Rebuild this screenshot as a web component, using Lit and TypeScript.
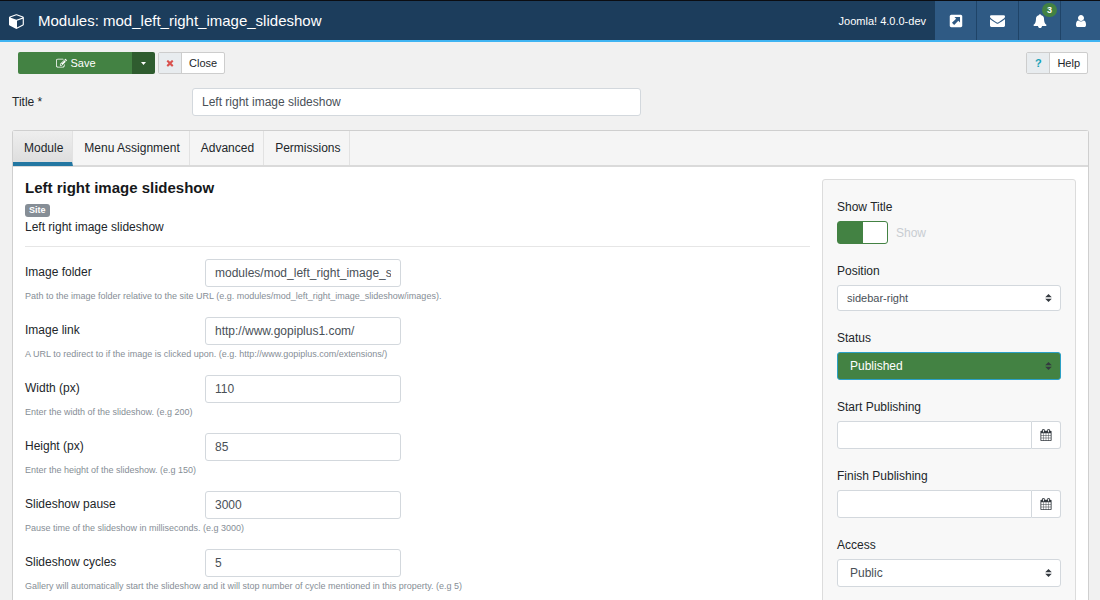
import { LitElement, html, css, svg } from "lit";
import { customElement, state } from "lit/decorators.js";
import { classMap } from "lit/directives/class-map.js";

const ICONS = {
  cube: "M896 1629l640-349v-636l-640 233v752zm-64-865l698-254-698-254-698 254zm832-252v768q0 35-18 65t-49 47l-704 384q-28 16-61 16t-61-16l-704-384q-31-17-49-47t-18-65v-768q0-40 23-73t61-47l704-256q22-8 44-8t44 8l704 256q38 14 61 47t23 73z",
  edit: "M888 1184l116-116-152-152-116 116v56h96v96h56zm440-720q-16-16-33 1l-350 350q-17 17-1 33t33-1l350-350q17-17 1-33zm80 594v190q0 119-84.5 203.5t-203.5 84.5h-832q-119 0-203.5-84.5t-84.5-203.5v-832q0-119 84.5-203.5t203.5-84.5h832q63 0 117 25 15 7 18 23 3 17-9 29l-49 49q-14 14-32 8-23-6-45-6h-832q-66 0-113 47t-47 113v832q0 66 47 113t113 47h832q66 0 113-47t47-113v-126q0-13 9-22l64-64q15-15 35-7t20 29zm-96-738l288 288-672 672h-288v-288zm444 132l-92 92-288-288 92-92q28-28 68-28t68 28l152 152q28 28 28 68t-28 68z",
  times: "M1490 1322q0 40-28 68l-136 136q-28 28-68 28t-68-28l-294-294-294 294q-28 28-68 28t-68-28l-136-136q-28-28-28-68t28-68l294-294-294-294q-28-28-28-68t28-68l136-136q28-28 68-28t68 28l294 294 294-294q28-28 68-28t68 28l136 136q28 28 28 68t-28 68l-294 294 294 294q28 28 28 68z",
  external: "M288 96h1216q80 0 136 56t56 136v1216q0 80-56 136t-136 56h-1216q-80 0-136-56t-56-136v-1216q0-80 56-136t136-56zM700 384l210 210-530 530 280 280 530-530 220 220V384z",
  envelope: "M1792 710v794q0 66-47 113t-113 47h-1472q-66 0-113-47t-47-113v-794q44 49 101 87 362 246 497 345 57 42 92.500 65.500t94.500 48 110 24.500h2q51 0 110-24.500t94.500-48 92.500-65.500q170-123 498-345 57-39 100-87zm0-294q0 79-49 151t-122 123q-376 261-468 325-10 7-42.500 31t-54 38.500-52 32.500-57.500 27-50 9h-2q-23 0-50-9t-57.500-27-52-32.500-54-38.500-42.500-31q-91-64-262-182.500t-205-142.500q-62-42-117-115.500t-55-136.500q0-78 41.500-130t118.500-52h1472q65 0 112.500 47t47.500 113z",
  bell: "M1728 1408q0 52-38 90t-90 38h-448q0 106-75 181t-181 75-181-75-75-181h-448q-52 0-90-38t-38-90q50-42 91-88t85-119.500 74.500-158.500 50-206 19.500-260q0-152 117-282.500t307-158.500q-8-19-8-39 0-40 28-68t68-28 68 28 28 68q0 20-8 39 190 28 307 158.500t117 282.500q0 139 19.500 260t50 206 74.500 158.500 85 119.500 91 88z",
  user: "M1536 1399q0 109-62.500 187t-150.500 78h-854q-88 0-150.500-78t-62.500-187q0-85 8.500-160.500t31.500-152 58.500-131 94-89 134.500-34.500q131 128 313 128t313-128q76 0 134.500 34.500t94 89 58.500 131 31.500 152 8.500 160.500zm-256-887q0 159-112.500 271.500t-271.500 112.500-271.500-112.500-112.500-271.500 112.500-271.500 271.500-112.500 271.500 112.500 112.500 271.500z",
  calendar: "M192 1664h288v-288h-288v288zm352 0h320v-288h-320v288zm-352-352h288v-320h-288v320zm352 0h320v-320h-320v320zm-352-384h288v-288h-288v288zm736 736h320v-288h-320v288zm-384-736h320v-288h-320v288zm768 736h288v-288h-288v288zm-384-352h320v-320h-320v320zm-352-864v-288q0-13-9.500-22.500t-22.500-9.500h-64q-13 0-22.500 9.500t-9.500 22.500v288q0 13 9.500 22.500t22.500 9.500h64q13 0 22.500-9.500t9.500-22.500zm736 864h288v-320h-288v320zm-384-384h320v-288h-320v288zm384 0h288v-288h-288v288zm32-480v-288q0-13-9.500-22.500t-22.500-9.500h-64q-13 0-22.500 9.500t-9.500 22.500v288q0 13 9.500 22.500t22.500 9.500h64q13 0 22.500-9.500t9.500-22.500zm384-64v1280q0 52-38 90t-90 38h-1408q-52 0-90-38t-38-90v-1280q0-52 38-90t90-38h128v-96q0-66 47-113t113-47h64q66 0 113 47t47 113v96h384v-96q0-66 47-113t113-47h64q66 0 113 47t47 113v96h128q52 0 90 38t38 90z",
};

const icon = (name: keyof typeof ICONS, size: number) => html`
  <svg width=${size} height=${size} viewBox="0 0 1792 1792" fill="currentColor" aria-hidden="true">
    ${svg`<path fill-rule=${name === "external" ? "evenodd" : "nonzero"} d=${ICONS[name]}></path>`}
  </svg>`;

const FIELDS = [
  { id: "folder", label: "Image folder", value: "modules/mod_left_right_image_slideshow/images", help: "Path to the image folder relative to the site URL (e.g. modules/mod_left_right_image_slideshow/images)." },
  { id: "link", label: "Image link", value: "http://www.gopiplus1.com/", help: "A URL to redirect to if the image is clicked upon. (e.g. http://www.gopiplus.com/extensions/)" },
  { id: "width", label: "Width (px)", value: "110", help: "Enter the width of the slideshow. (e.g 200)" },
  { id: "height", label: "Height (px)", value: "85", help: "Enter the height of the slideshow. (e.g 150)" },
  { id: "pause", label: "Slideshow pause", value: "3000", help: "Pause time of the slideshow in milliseconds. (e.g 3000)" },
  { id: "cycles", label: "Slideshow cycles", value: "5", help: "Gallery will automatically start the slideshow and it will stop number of cycle mentioned in this property. (e.g 5)" },
];

const TABS = ["Module", "Menu Assignment", "Advanced", "Permissions"];

@customElement("app-root")
export class AppRoot extends LitElement {
  @state() private tab = 0;

  static styles = css`
    :host {
      display: block;
      min-height: 100vh;
      background: #f1f1f1;
      color: #22262a;
      font: 12px/14px "Liberation Sans", Arial, sans-serif;
    }
    * { box-sizing: border-box; }
    button, input, select { font: inherit; color: inherit; margin: 0; padding: 0; border: 0; }
    button { cursor: pointer; }
    svg { display: block; flex: none; }

    .topbar {
      display: flex;
      height: 42px;
      background: #1c3d5c;
      border-top: 1px solid #0b0d12;
      border-bottom: 2px solid #3fb4f2;
      color: #fff;
    }
    .heading { display: flex; align-items: center; gap: 13px; padding-left: 9px; flex: 1; min-width: 0; }
    .heading h1 { margin: 0; font-size: 15px; line-height: 18px; font-weight: 400; white-space: nowrap; }
    .version { align-self: center; padding-right: 9px; font-size: 11px; white-space: nowrap; }
    .topnav { display: flex; }
    .topnav a {
      position: relative;
      display: flex;
      align-items: center;
      justify-content: center;
      width: 41px;
      color: #fff;
      background: #2f5a84;
    }
    .topnav a + a { width: 42px; border-left: 1px solid #1f4468; }
    .topnav a:last-child { width: 40px; }
    .badge {
      position: absolute;
      top: 2px;
      right: 3px;
      width: 15px;
      height: 14px;
      border-radius: 7px;
      background: #438243;
      font-size: 9px;
      font-weight: 700;
      line-height: 14px;
      text-align: center;
    }

    .toolbar { display: flex; gap: 3px; padding: 10px 12px 0 18px; }
    .save { display: flex; width: 137px; height: 22px; border-radius: 2px; overflow: hidden; color: #fff; font-size: 11px; }
    .save button { display: flex; align-items: center; justify-content: center; background: #438243; }
    .save .main { flex: 1; gap: 3px; padding-left: 2px; }
    .save .more { width: 23px; background: #2f5c2f; }
    .split {
      display: flex;
      align-items: stretch;
      height: 22px;
      border: 1px solid #cdcdcd;
      border-radius: 2px;
      overflow: hidden;
      background: #fff;
      font-size: 11px;
    }
    .split .mark {
      display: flex;
      align-items: center;
      justify-content: center;
      width: 23px;
      background: #e8ecef;
      border-right: 1px solid #cdcdcd;
    }
    .split .text { padding: 0 7px; line-height: 20px; }
    .cross { color: #d9534f; }
    .question { color: #17a2b8; font-weight: 700; }
    .spacer { flex: 1; }

    .input {
      display: block;
      width: 100%;
      height: 28px;
      padding: 0 9px;
      border: 1px solid #d3d8dd;
      border-radius: 3px;
      background: #fff;
      color: #495057;
    }
    .titlerow { display: flex; align-items: center; padding: 14px 12px; }
    .titlerow label { width: 180px; flex: none; }
    .titlerow .input { max-width: 449px; }

    .panel { margin: 0 11px 0 12px; border: 1px solid #cfcfcf; border-bottom: 0; border-radius: 3px 3px 0 0; background: #fff; }
    .tabs { display: flex; height: 36px; background: #f5f5f5; border-bottom: 2px solid #dadada; }
    .tab { padding: 0 9px 0 11px; background: none; border-right: 1px solid #e2e2e2; line-height: 34px; white-space: nowrap; }
    .tab.active {
      height: 35px;
      background: linear-gradient(#eeeeee, #dedede);
      border-bottom: 4px solid #2377a2;
      line-height: 35px;
    }
    .body {
      display: grid;
      grid-template-columns: minmax(0, 1fr) 254px;
      gap: 12px;
      padding: 12px;
    }
    .body h2 { margin: 0; font-size: 15px; line-height: 17px; color: #16181a; }
    .site {
      display: inline-block;
      margin-top: 8px;
      padding: 0 4px;
      border-radius: 3px;
      background: #868e96;
      color: #fff;
      font-size: 9px;
      line-height: 13px;
      font-weight: 700;
      vertical-align: top;
    }
    .desc { margin: 3px 0 0; }
    .rule { margin: 12px 0; border: 0; border-top: 1px solid #e6e6e6; }
    .field { margin-bottom: 15px; }
    .line { display: flex; align-items: flex-start; }
    .line label { width: 180px; flex: none; padding-top: 6px; }
    .line .input { width: 196px; }
    .help { margin: 4px 0 0; color: #868e96; font-size: 9px; line-height: 11px; }

    .side {
      display: flex;
      flex-direction: column;
      gap: 20px;
      padding: 20px 14px;
      border: 1px solid #dcdcdc;
      border-radius: 3px;
      background: #f8f8f8;
    }
    .group { display: flex; flex-direction: column; gap: 7px; }
    .switch { display: flex; align-items: center; gap: 8px; color: #c8cdd2; }
    .toggle {
      appearance: none;
      width: 51px;
      height: 23px;
      border: 1px solid #438243;
      border-radius: 3px;
      background: linear-gradient(90deg, #438243 25px, #fff 25px);
    }
    .toggle:not(:checked) { background: linear-gradient(270deg, #ccc 25px, #fff 25px); border-color: #ccc; }
    .select { display: grid; align-items: center; }
    .select > * { grid-area: 1 / 1; }
    .select svg { justify-self: end; margin-right: 9px; pointer-events: none; color: #343a40; }
    .select select { appearance: none; padding: 0 12px; }
    .select .compact { height: 26px; padding: 0 9px; font-size: 11px; }
    .select .published { background: #438243; border-color: #2ba0c6; color: #fff; }
    .date { display: flex; }
    .date .input { flex: 1; min-width: 0; border-radius: 3px 0 0 3px; }
    .date button {
      display: flex;
      align-items: center;
      justify-content: center;
      width: 29px;
      border: 1px solid #d3d8dd;
      border-left: 0;
      border-radius: 0 3px 3px 0;
      background: #fff;
      color: #343a40;
    }
  `;

  private select(id: string, label: string, value: string, kind = "") {
    return html`
      <div class="group">
        <label for=${id}>${label}</label>
        <div class="select">
          <select id=${id} class="input ${kind}"><option>${value}</option></select>
          <svg width="7" height="8" viewBox="0 0 7 8" fill="currentColor"><path d="M3.500 0L6.800 3.200H.2zM3.500 8L.2 4.800h6.600z"></path></svg>
        </div>
      </div>`;
  }

  private date(id: string, label: string) {
    return html`
      <div class="group">
        <label for=${id}>${label}</label>
        <div class="date">
          <input id=${id} class="input" type="text" />
          <button type="button" aria-label="Open the calendar">${icon("calendar", 12)}</button>
        </div>
      </div>`;
  }

  render() {
    return html`
      <header class="topbar">
        <div class="heading">${icon("cube", 16)}<h1>Modules: mod_left_right_image_slideshow</h1></div>
        <span class="version">Joomla! 4.0.0-dev</span>
        <nav class="topnav">
          <a href="#preview" aria-label="Preview">${icon("external", 14)}</a>
          <a href="#messages" aria-label="Messages">${icon("envelope", 15)}</a>
          <a href="#notifications" aria-label="Notifications">${icon("bell", 14)}<span class="badge">3</span></a>
          <a href="#user" aria-label="User menu">${icon("user", 14)}</a>
        </nav>
      </header>

      <div class="toolbar">
        <div class="save">
          <button class="main" type="button">${icon("edit", 11)}Save</button>
          <button class="more" type="button" aria-label="More save options">
            <svg width="5" height="3" viewBox="0 0 5 3" fill="currentColor"><path d="M0 0h5L2.500 3z"></path></svg>
          </button>
        </div>
        <button class="split" type="button"><span class="mark cross">${icon("times", 10)}</span><span class="text">Close</span></button>
        <span class="spacer"></span>
        <button class="split" type="button"><span class="mark question">?</span><span class="text">Help</span></button>
      </div>

      <div class="titlerow">
        <label for="title">Title *</label>
        <input id="title" class="input" type="text" .value=${"Left right image slideshow"} />
      </div>

      <main class="panel">
        <div class="tabs" role="tablist">
          ${TABS.map((name, i) => html`
            <button type="button" role="tab" aria-selected=${i === this.tab}
              class=${classMap({ tab: true, active: i === this.tab })}
              @click=${() => (this.tab = i)}>${name}</button>`)}
        </div>
        <div class="body">
          <section>
            <h2>Left right image slideshow</h2>
            <span class="site">Site</span>
            <p class="desc">Left right image slideshow</p>
            <hr class="rule" />
            ${FIELDS.map((f) => html`
              <div class="field">
                <div class="line">
                  <label for=${f.id}>${f.label}</label>
                  <input id=${f.id} class="input" type="text" .value=${f.value} />
                </div>
                <p class="help">${f.help}</p>
              </div>`)}
          </section>
          <aside class="side">
            <div class="group">
              <label for="show">Show Title</label>
              <div class="switch"><input id="show" class="toggle" type="checkbox" checked /><span>Show</span></div>
            </div>
            ${this.select("position", "Position", "sidebar-right", "compact")}
            ${this.select("status", "Status", "Published", "published")}
            ${this.date("start", "Start Publishing")}
            ${this.date("finish", "Finish Publishing")}
            ${this.select("access", "Access", "Public")}
          </aside>
        </div>
      </main>
    `;
  }
}
